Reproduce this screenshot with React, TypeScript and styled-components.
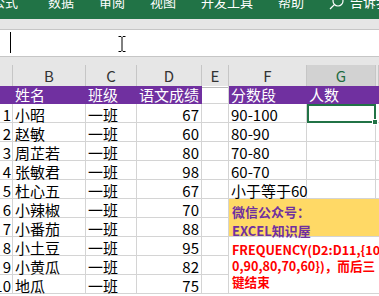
import React from "react";
import styled, { createGlobalStyle, css } from "styled-components";

const GlobalStyle = createGlobalStyle`
  html, body {
    margin: 0;
    padding: 0;
    background: #ffffff;
  }
  body {
    width: 379px;
    height: 296px;
    overflow: hidden;
    font-family: "Noto Sans CJK SC", "Noto Sans", sans-serif;
  }
`;

const COLUMNS = "13px 73px 51px 65px 27px 78px 69px 1fr";

const scores = [
  { name: "小昭", score: 67 },
  { name: "赵敏", score: 60 },
  { name: "周芷若", score: 80 },
  { name: "张敏君", score: 98 },
  { name: "杜心五", score: 67 },
  { name: "小辣椒", score: 70 },
  { name: "小番茄", score: 88 },
  { name: "小土豆", score: 95 },
  { name: "小黄瓜", score: 82 },
  { name: "地瓜", score: 75 },
];

const bands = ["90-100", "80-90", "70-80", "60-70", "小于等于60"];
const tabs = ["公式", "数据", "审阅", "视图", "开发工具", "帮助"];
const letters = ["", "B", "C", "D", "E", "F", "G", ""];

const App: React.FC = () => {
  return (
    <Page>
      <GlobalStyle />
      <Ribbon>
        {tabs.map((t) => (
          <Tab key={t}>{t}</Tab>
        ))}
        <TellMe>
          <SearchIcon width="16" height="16" viewBox="0 0 16 16">
            <circle cx="9" cy="6" r="5" fill="none" stroke="#fff" strokeWidth="1.2" />
            <line x1="5.4" y1="9.6" x2="1" y2="14" stroke="#fff" strokeWidth="1.3" />
          </SearchIcon>
          <span>告诉我</span>
        </TellMe>
      </Ribbon>
      <Band $h={10} />
      <FormulaBar>
        <Caret />
        <IBeam width="8" height="16" viewBox="0 0 8 16">
          <path
            d="M0.5 0.5h2.5l1 1l1-1h2.5M4 1.5v13M0.5 15.5h2.5l1-1l1 1h2.5"
            fill="none"
            stroke="#000"
            strokeWidth="1"
          />
        </IBeam>
      </FormulaBar>
      <Band $h={8} />
      <HeaderRow>
        {letters.map((l, i) => (
          <ColHead key={i} $active={l === "G"}>
            {l}
          </ColHead>
        ))}
      </HeaderRow>
      <Sheet>
        <Cell $purple />
        <Cell $purple>姓名</Cell>
        <Cell $purple>班级</Cell>
        <Cell $purple>语文成绩</Cell>
        <Cell />
        <Cell $purple>分数段</Cell>
        <Cell $purple>人数</Cell>
        <Cell $purple />
        {scores.map((s, i) => (
          <React.Fragment key={s.name}>
            <Cell $align="right" $tight>
              {i + 1}
            </Cell>
            <Cell>{s.name}</Cell>
            <Cell>一班</Cell>
            <Cell $align="right">{s.score}</Cell>
            <Cell />
            {i < 5 && (
              <>
                <Cell>{bands[i]}</Cell>
                <Cell $selected={i === 0} />
                <Cell />
              </>
            )}
            {i === 5 && (
              <Note $rows={2} $fill="#ffd966" $color="#7030a0">
                <NoteLine>微信公众号：</NoteLine>
                <NoteLine>EXCEL知识屋</NoteLine>
              </Note>
            )}
            {i === 7 && (
              <Formula $rows={3} $color="#ff0000">
                <FormulaLine>FREQUENCY(D2:D11,{"{"}10</FormulaLine>
                <FormulaLine>0,90,80,70,60{"}"})，而后三</FormulaLine>
                <FormulaLine>键结束</FormulaLine>
              </Formula>
            )}
          </React.Fragment>
        ))}
      </Sheet>
    </Page>
  );
};

const Page = styled.div`
  width: 379px;
  height: 296px;
  overflow: hidden;
  display: flex;
  flex-direction: column;
`;

const Ribbon = styled.div`
  height: 19px;
  flex-shrink: 0;
  background: #217346;
  color: #ffffff;
  display: flex;
  align-items: flex-start;
  overflow: hidden;
  font-size: 13px;
  line-height: 13px;
  white-space: nowrap;
`;

const Tab = styled.div`
  margin-top: -5px;
  margin-right: 25px;

  &:first-child {
    margin-left: -8px;
    margin-right: 30px;
  }
`;

const TellMe = styled.div`
  display: flex;
  align-items: flex-start;
  gap: 5px;
  margin-top: -5px;
`;

const SearchIcon = styled.svg`
  flex-shrink: 0;
  margin-top: -0.5px;
`;

const Band = styled.div<{ $h: number }>`
  height: ${(p) => p.$h}px;
  flex-shrink: 0;
  background: #e6e6e6;
`;

const FormulaBar = styled.div`
  box-sizing: border-box;
  height: 28px;
  flex-shrink: 0;
  background: #ffffff;
  border-top: 1px solid #c6c6c6;
  border-bottom: 1px solid #c6c6c6;
  display: flex;
  align-items: flex-start;
  padding: 2px 0 0 10px;
`;

const Caret = styled.div`
  width: 1px;
  height: 21px;
  background: #000000;
`;

const IBeam = styled.svg`
  margin: 4px 0 0 107px;
`;

const HeaderRow = styled.div`
  display: grid;
  grid-template-columns: ${COLUMNS};
  height: 21px;
  flex-shrink: 0;
  background: #e6e6e6;
`;

const ColHead = styled.div<{ $active?: boolean }>`
  box-sizing: border-box;
  border-right: 1px solid #c6c6c6;
  border-bottom: 1px solid #bcbcbc;
  text-align: center;
  font-size: 15px;
  line-height: 21px;
  color: #333333;

  ${(p) =>
    p.$active &&
    css`
      background: #d2d2d2;
      color: #1e6b41;
      border-bottom: 2px solid #217346;
    `}
`;

const Sheet = styled.div`
  display: grid;
  grid-template-columns: ${COLUMNS};
  grid-template-rows: 18px repeat(10, 19px);
  font-size: 15px;
  color: #000000;
`;

const Cell = styled.div<{
  $align?: "left" | "right";
  $purple?: boolean;
  $selected?: boolean;
  $tight?: boolean;
}>`
  box-sizing: border-box;
  position: relative;
  display: flex;
  justify-content: ${(p) => (p.$align === "right" ? "flex-end" : "flex-start")};
  padding: 3px ${(p) => (p.$tight ? 1 : 2)}px 0 2px;
  line-height: 15px;
  white-space: nowrap;
  border-right: 1px solid #d4d4d4;
  border-bottom: 1px solid #d4d4d4;

  ${(p) =>
    p.$purple &&
    css`
      background: #7030a0;
      color: #ffffff;
      border-color: #7030a0;
      padding-top: 1px;
    `}

  ${(p) =>
    p.$selected &&
    css`
      outline: 2px solid #217346;
      outline-offset: -2px;

      &::after {
        content: "";
        position: absolute;
        right: -3px;
        bottom: -3px;
        width: 4px;
        height: 4px;
        background: #217346;
        border: 1px solid #ffffff;
        z-index: 1;
      }
    `}
`;

const Note = styled.div<{ $rows: number; $fill?: string; $color: string }>`
  grid-column: span 3;
  grid-row: span ${(p) => p.$rows};
  background: ${(p) => p.$fill ?? "transparent"};
  color: ${(p) => p.$color};
  font-size: 13px;
  font-weight: 700;
  padding: 3px 0 0 3px;
  border-bottom: 1px solid #d4d4d4;
  white-space: nowrap;
`;

const NoteLine = styled.div`
  line-height: 19px;
`;

const Formula = styled(Note)`
  padding-top: 5px;
  font-size: 12.6px;
`;

const FormulaLine = styled.div`
  line-height: 16px;
`;

export default App;
